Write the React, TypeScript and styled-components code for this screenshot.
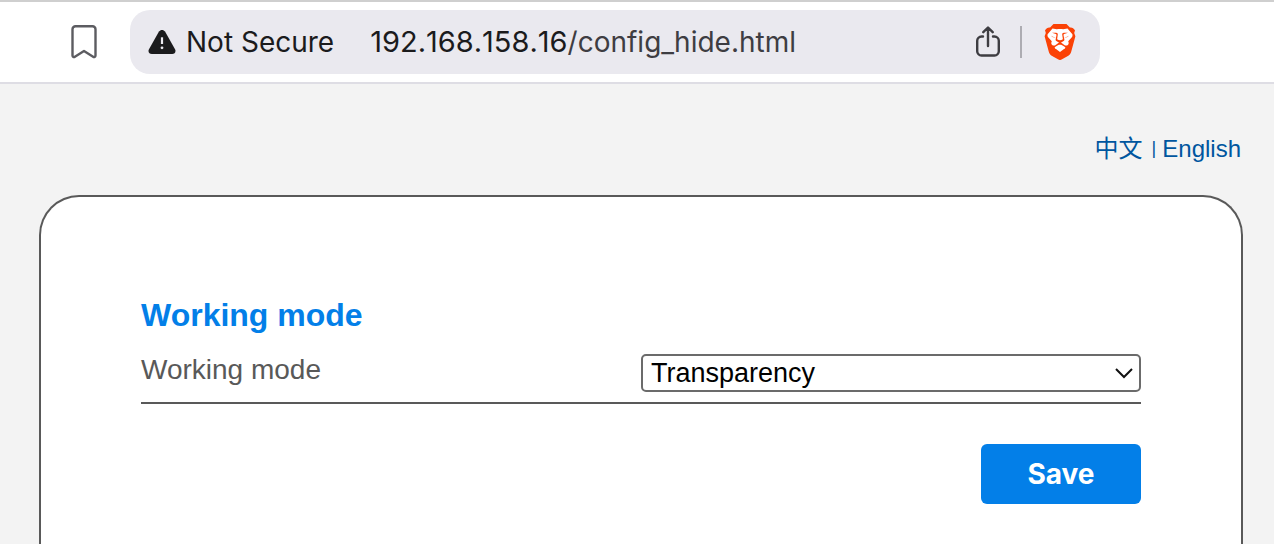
import React, { useState } from "react";
import styled, { createGlobalStyle } from "styled-components";

const GlobalStyle = createGlobalStyle`
  *, *::before, *::after { box-sizing: border-box; }
  html { background: #f3f3f3; }
  body {
    margin: 0;
    overflow: hidden;
    font-family: "Liberation Sans", Arial, sans-serif;
    color: #595959;
  }
`;

const Page = styled.div`
  display: flex;
  flex-direction: column;
  min-height: 100vh;
`;

const Toolbar = styled.header`
  display: flex;
  align-items: center;
  gap: 32px;
  padding: 8px 174px 8px 70px;
  background: #ffffff;
  border-top: 2px solid #cfcfcf;
  border-bottom: 2px solid #dedde4;
  font-family: Inter, sans-serif;
`;

const IconButton = styled.button`
  display: flex;
  flex: none;
  padding: 0;
  border: 0;
  background: transparent;
  cursor: pointer;
`;

const AddressBar = styled.div`
  display: flex;
  flex: 1;
  align-items: center;
  min-width: 0;
  height: 64px;
  padding: 0 24px 0 18px;
  border-radius: 20px;
  background: #eae9ef;
  font-size: 28px;
  line-height: 36px;
  white-space: nowrap;
`;

const Security = styled.span`
  display: flex;
  align-items: center;
  gap: 10px;
  color: #1b1b1d;
`;

const Address = styled.span`
  flex: 1;
  margin-left: 36px;
  color: #3e3d42;
  font-kerning: none;
`;

const Host = styled.span`
  color: #1b1b1d;
  font-size: 29px;
`;

const Divider = styled.span`
  width: 2px;
  height: 32px;
  margin: 0 22px 0 19px;
  background: #adacb2;
`;

const Languages = styled.nav`
  display: flex;
  align-items: center;
  justify-content: flex-end;
  gap: 6px;
  padding: 49px 33px 31px;
  color: #00569f;
  font-size: 24px;
  line-height: 31px;
`;

const LanguageLink = styled.a`
  color: inherit;
  text-decoration: none;
  font-family: "Liberation Sans", "Noto Sans CJK SC", sans-serif;

  &:first-child {
    margin-right: 3px;
  }
`;

const Separator = styled.span`
  font-size: 18px;
`;

const Panel = styled.main`
  display: flex;
  flex: 1;
  flex-direction: column;
  margin: 0 31px 0 39px;
  padding: 98px 100px 40px;
  border: 2px solid #595959;
  border-bottom: 0;
  border-radius: 40px 40px 0 0;
  background: #ffffff;
`;

const Title = styled.h1`
  margin: 0;
  color: #037fe8;
  font-size: 32px;
  line-height: 40px;
`;

const FieldRow = styled.div`
  display: flex;
  align-items: flex-start;
  justify-content: space-between;
  padding: 19px 0 10px;
  border-bottom: 2px solid #595959;
`;

const Label = styled.label`
  font-size: 28px;
  line-height: 32px;
`;

const SelectBox = styled.div`
  display: grid;
  width: 50%;
  align-items: center;
`;

const Select = styled.select`
  grid-area: 1 / 1;
  width: 100%;
  height: 38px;
  padding: 0 40px 0 8px;
  border: 2px solid #6b6b6b;
  border-radius: 5px;
  background: #ffffff;
  color: #000000;
  font-family: inherit;
  font-size: 27px;
  line-height: 32px;
  appearance: none;
`;

const Chevron = styled.svg`
  grid-area: 1 / 1;
  justify-self: end;
  margin-right: 7px;
  pointer-events: none;
`;

const SaveButton = styled.button`
  align-self: flex-end;
  width: 160px;
  height: 60px;
  margin-top: 40px;
  padding: 0;
  border: 0;
  border-radius: 6px;
  background: #037fe8;
  color: #ffffff;
  font-family: Inter, sans-serif;
  font-size: 28px;
  font-weight: 700;
  cursor: pointer;
`;

const BookmarkIcon = () => (
  <svg width="28" height="36" viewBox="0 0 28 36" fill="none" stroke="#5c5c61" strokeWidth="2.4" strokeLinejoin="round" aria-hidden="true">
    <path d="M5.5 2.2h17a3 3 0 0 1 3 3v26.2c0 1.4-1.3 2.1-2.4 1.3L14 27l-9.1 5.7c-1.1.8-2.4.1-2.4-1.3V5.2a3 3 0 0 1 3-3z" />
  </svg>
);

const WarningIcon = () => (
  <svg width="28" height="26" viewBox="0 0 28 26" aria-hidden="true">
    <path fill="#1b1b1d" d="M11 2.6c1.4-2.3 4.6-2.3 6 0L27 20.2c1.3 2.3-.2 4.8-2.8 4.8H3.8C1.2 25-.3 22.5 1 20.2z" />
    <path d="M14 8.3v6.7" stroke="#eae9ef" strokeWidth="2.2" />
    <circle cx="14" cy="18.8" r="1.4" fill="#eae9ef" />
  </svg>
);

const ShareIcon = () => (
  <svg width="26" height="32" viewBox="0 0 26 32" fill="none" stroke="#3e3d42" strokeWidth="2.4" strokeLinecap="round" strokeLinejoin="round" aria-hidden="true">
    <path d="M8 10.5H6.5A4.3 4.3 0 0 0 2.2 14.8v10.4A4.3 4.3 0 0 0 6.5 29.5h13a4.3 4.3 0 0 0 4.3-4.3V14.8A4.3 4.3 0 0 0 19.5 10.5H18M13 20V2M8.3 6.2L13 1.5l4.7 4.7" />
  </svg>
);

const BraveIcon = () => (
  <svg width="32" height="36" viewBox="0 0 32 36" aria-hidden="true">
    <path fill="#fb4206" d="M9.5 0h13l3.4 3.6c2.2-.5 3.7 1 5.1 2.7L30.2 9l1.2 3.3-4.2 15.5c-.5 1.9-1.4 3-2.9 4L17.6 35.5c-1.1.7-2.1.7-3.2 0L7.7 31.8c-1.5-1-2.4-2.1-2.9-4L.6 12.3 1.8 9 1 6.3c1.4-1.7 2.9-3.2 5.1-2.7z" />
    <path fill="#ffffff" d="M8.5 4.5l4.3.8c2.1-.5 4.3-.5 6.4 0l4.3-.8 4.9 5.7c.3 1.4 0 2.5-1 3.6l-3.2 3.5c.9 1.7.6 3-.7 3.9-1.2.7-2.4.5-3.5-.5L16 17.7l-4 3c-1.1 1-2.3 1.2-3.5.5-1.3-.9-1.6-2.2-.7-3.9l-3.2-3.5c-1-1.1-1.300-2.200-1-3.600z" />
    <path fill="#ffffff" d="M16 20.3c2.3.9 4.1 2 5.2 3 .3.4.2.7-.2 1L16 28l-5-3.7c-.4-.3-.5-.6-.2-1 1.1-1 2.900-2.100 5.200-3z" />
    <path fill="#fb4206" d="M8 8.7l4.2.1c1 .1 1.7.8 1.6 1.8l-.7 4.7c1 .6 1.9 1 2.9 1 1 0 1.9-.4 2.9-1l-.7-4.7c-.1-1 .6-1.7 1.6-1.8l4.2-.1-3.9 1.2c-.5.2-.7.5-.6 1l.9 4.8c0 .5-.2.9-.7 1.2L16.7 18.7v2h-1.4v-2L12.3 16.9c-.5-.3-.7-.7-.7-1.2l.9-4.8c.1-.5-.1-.8-.6-1z" />
    <path fill="#fb4206" d="M6.8 11.4c1.6 1.3 3.2 1.8 4.9 1.6-1.9.6-3.6.1-4.9-1.6zM25.2 11.4c-1.6 1.3-3.2 1.8-4.9 1.6 1.9.6 3.6.1 4.9-1.6z" />
  </svg>
);

export default function App() {
  const [mode, setMode] = useState("transparency");

  return (
    <Page>
      <GlobalStyle />
      <Toolbar>
        <IconButton type="button" aria-label="Bookmark">
          <BookmarkIcon />
        </IconButton>
        <AddressBar>
          <Security>
            <WarningIcon />
            Not Secure
          </Security>
          <Address>
            <Host>192.168.158.16</Host>/config_hide.html
          </Address>
          <IconButton type="button" aria-label="Share">
            <ShareIcon />
          </IconButton>
          <Divider />
          <IconButton type="button" aria-label="Brave Shields">
            <BraveIcon />
          </IconButton>
        </AddressBar>
      </Toolbar>
      <Languages>
        <LanguageLink href="#zh" lang="zh-CN">中文</LanguageLink>
        <Separator>|</Separator>
        <LanguageLink href="#en">English</LanguageLink>
      </Languages>
      <Panel>
        <Title>Working mode</Title>
        <FieldRow>
          <Label htmlFor="working-mode">Working mode</Label>
          <SelectBox>
            <Select id="working-mode" value={mode} onChange={(e) => setMode(e.target.value)}>
              <option value="transparency">Transparency</option>
            </Select>
            <Chevron width="20" height="12" viewBox="0 0 20 12" fill="none" stroke="#111111" strokeWidth="2" aria-hidden="true">
              <path d="M2 2l8 8 8-8" />
            </Chevron>
          </SelectBox>
        </FieldRow>
        <SaveButton type="button">Save</SaveButton>
      </Panel>
    </Page>
  );
}
